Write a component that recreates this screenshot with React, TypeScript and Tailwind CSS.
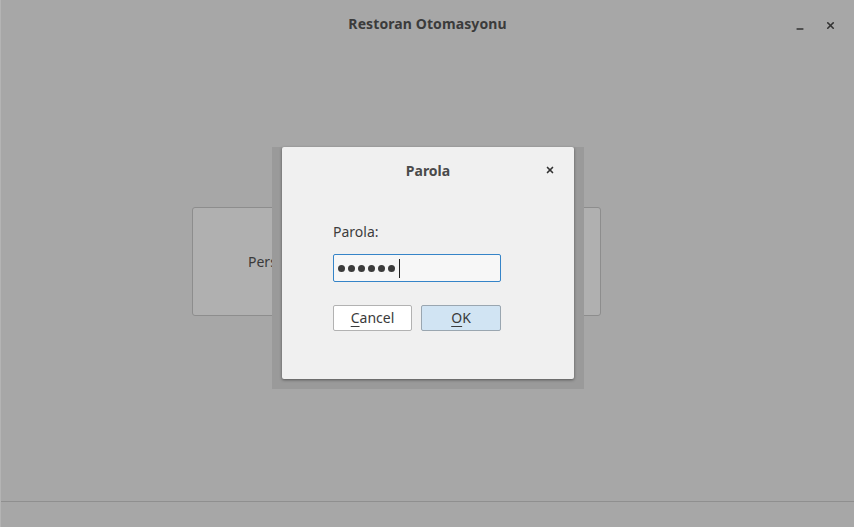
import { Minus, X } from 'lucide-react'

const font = { fontFamily: '"Noto Sans", "Open Sans", sans-serif' }

function PasswordDots({ count }: { count: number }) {
  return (
    <div className="flex items-center gap-[3px]">
      {Array.from({ length: count }).map((_, i) => (
        <span key={i} className="w-[7px] h-[7px] rounded-full bg-[#3c3c3c]" />
      ))}
      <span className="ml-[1px] w-px h-[19px] bg-[#222]" />
    </div>
  )
}

export default function App() {
  return (
    <div
      className="relative w-[854px] h-[527px] overflow-hidden bg-[#a7a7a7] text-[#333]"
      style={font}
    >
      <div className="flex flex-col h-full border-l border-[#b4b4b4]">
        <header className="relative h-[46px] flex items-center justify-center">
          <span className="text-[14px] font-bold text-[#3b3b3b] tracking-[0.1px]">
            Restoran Otomasyonu
          </span>
          <div className="absolute right-[18px] top-[16px] flex items-center gap-[20px]">
            <Minus className="w-[10px] h-[10px] text-[#333] mt-[8px]" strokeWidth={3.5} />
            <X className="w-[11px] h-[11px] text-[#333]" strokeWidth={3.5} />
          </div>
        </header>

        <main className="flex-1 flex flex-col">
          <div className="ml-[191px] mt-[161px] w-[409px] h-[109px] rounded-[3px] border border-[#8d8d8d] bg-[#b0b0b0] flex items-center pl-[55px]">
            <span className="text-[14px] text-[#3a3a3a]">Personel</span>
          </div>
        </main>

        <footer className="h-[26px] border-t border-[#8f8f8f]" />
      </div>

      {/* modal shadow */}
      <div className="absolute left-[272px] top-[147px] w-[312px] h-[242px] bg-[#9a9a9a]" />

      <div className="absolute left-[282px] top-[147px] w-[292px] h-[232px] bg-[#f0f0f0] rounded-[2px] shadow-[0_1px_3px_rgba(0,0,0,0.45)] flex flex-col">
        <div className="relative h-[46px] flex items-center justify-center">
          <span className="text-[14px] font-bold text-[#4a4a4a]">Parola</span>
          <X
            className="absolute right-[19px] top-[18px] w-[10px] h-[10px] text-[#333]"
            strokeWidth={4}
          />
        </div>

        <div className="pl-[51px] pr-[73px] flex flex-col">
          <span className="mt-[29px] text-[14px] text-[#3d3d3d] leading-[20px]">Parola:</span>
          <div className="mt-[12px] h-[28px] rounded-[2px] border border-[#3584c8] bg-[#f7f7f7] flex items-center pl-[4px]">
            <PasswordDots count={6} />
          </div>
          <div className="mt-[23px] flex gap-[9px]">
            <button className="w-[79px] h-[26px] rounded-[2px] border border-[#b2b2b2] bg-white text-[14px] text-[#3a3a3a] leading-none">
              <span className="underline underline-offset-[3px] decoration-1">C</span>ancel
            </button>
            <button className="w-[80px] h-[26px] rounded-[2px] border border-[#9aa6b0] bg-[#d1e4f3] text-[14px] text-[#3a3a3a] leading-none">
              <span className="underline underline-offset-[3px] decoration-1">O</span>K
            </button>
          </div>
        </div>
      </div>
    </div>
  )
}
